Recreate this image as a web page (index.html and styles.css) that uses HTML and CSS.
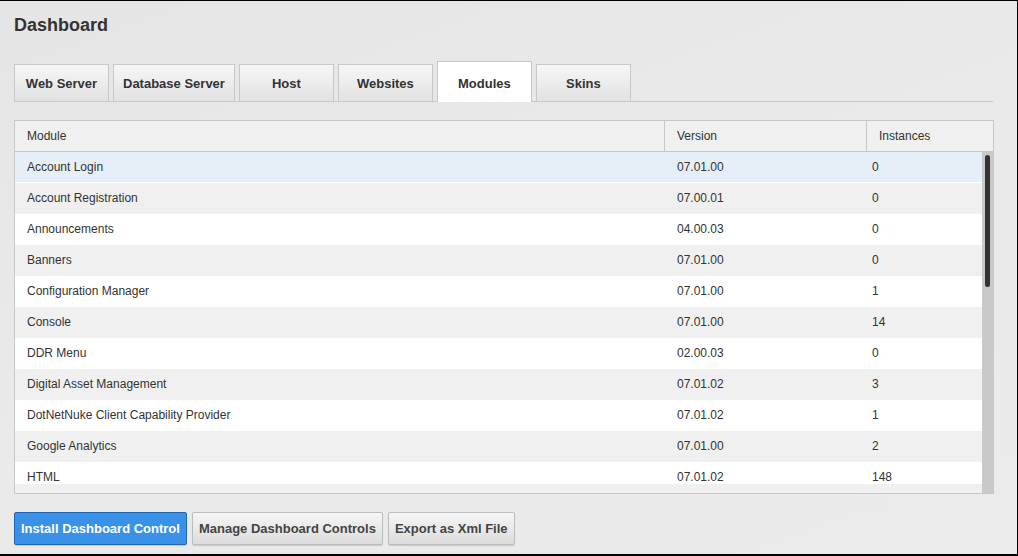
FILE: index.html
```html
<!DOCTYPE html>
<html lang="en">
<head>
<meta charset="utf-8">
<title>Dashboard</title>
<link rel="stylesheet" href="styles.css">
</head>
<body>
<div class="page">
  <h1 class="title">Dashboard</h1>
  <div class="tabs">
    <div class="tab">Web Server</div>
    <div class="tab">Database Server</div>
    <div class="tab">Host</div>
    <div class="tab">Websites</div>
    <div class="tab active">Modules</div>
    <div class="tab">Skins</div>
  </div>
  <div class="grid">
    <div class="grid-head">
      <div class="hcell c1">Module</div>
      <div class="hcell c2">Version</div>
      <div class="hcell c3">Instances</div>
    </div>
    <div class="grid-body">
      <div class="body-main">
        <div class="rows">
          <div class="row hl"><span>Account Login</span><span>07.01.00</span><span>0</span></div>
          <div class="row alt"><span>Account Registration</span><span>07.00.01</span><span>0</span></div>
          <div class="row"><span>Announcements</span><span>04.00.03</span><span>0</span></div>
          <div class="row alt"><span>Banners</span><span>07.01.00</span><span>0</span></div>
          <div class="row"><span>Configuration Manager</span><span>07.01.00</span><span>1</span></div>
          <div class="row alt"><span>Console</span><span>07.01.00</span><span>14</span></div>
          <div class="row"><span>DDR Menu</span><span>02.00.03</span><span>0</span></div>
          <div class="row alt"><span>Digital Asset Management</span><span>07.01.02</span><span>3</span></div>
          <div class="row"><span>DotNetNuke Client Capability Provider</span><span>07.01.02</span><span>1</span></div>
          <div class="row alt"><span>Google Analytics</span><span>07.01.00</span><span>2</span></div>
          <div class="row"><span>HTML</span><span>07.01.02</span><span>148</span></div>
        </div>
        <div class="hstrip"></div>
      </div>
      <div class="vtrack"><div class="vthumb"></div></div>
    </div>
  </div>
  <div class="actions">
    <button class="btn primary">Install Dashboard Control</button>
    <button class="btn">Manage Dashboard Controls</button>
    <button class="btn">Export as Xml File</button>
  </div>
</div>
</body>
</html>
```

FILE: styles.css
```css
* { box-sizing: border-box; }
html, body { margin: 0; padding: 0; }
body {
  width: 1018px;
  height: 556px;
  overflow: hidden;
  border-top: 1px solid #000;
  border-right: 1px solid #000;
  border-bottom: 2px solid #000;
  background: linear-gradient(160deg, #e5e5e5 0%, #eaeaea 50%, #ebebeb 100%);
  font-family: "Liberation Sans", Arial, sans-serif;
  color: #333;
}
.page {
  padding: 13px 24px 0 14px;
}
.title {
  margin: 0;
  font-size: 18px;
  line-height: 22px;
  font-weight: bold;
  color: #333;
}
.tabs {
  margin-top: 25px;
  display: flex;
  align-items: flex-end;
  gap: 4px;
  height: 41px;
  border-bottom: 1px solid #c8c8c8;
  width: 979px;
}
.tab {
  min-width: 95px;
  height: 37px;
  padding: 0 9px;
  border: 1px solid #c8c8c8;
  border-bottom: none;
  background: linear-gradient(#f6f6f6, #e2e2e2);
  font-size: 13px;
  font-weight: bold;
  color: #333;
  display: flex;
  align-items: center;
  justify-content: center;
  white-space: nowrap;
}
.tab.active {
  height: 41px;
  margin-bottom: -1px;
  background: #fff;
  padding-top: 2px;
}
.grid {
  margin-top: 18px;
  width: 980px;
  border: 1px solid #c8c8c8;
  background: #fff;
}
.grid-head {
  display: grid;
  grid-template-columns: 649px 202px 1fr;
  height: 31px;
  background: #eff0ef;
  border-bottom: 1px solid #c8c8c8;
}
.hcell {
  font-size: 12px;
  line-height: 30px;
  padding-left: 12px;
  color: #333;
}
.hcell.c2, .hcell.c3 { border-left: 1px solid #c8c8c8; }
.grid-body {
  display: flex;
  height: 341px;
}
.body-main {
  width: 967px;
  display: flex;
  flex-direction: column;
}
.rows {
  height: 332px;
  overflow: hidden;
}
.row {
  display: grid;
  grid-template-columns: 650px 195px 1fr;
  height: 31px;
  padding-bottom: 2px;
  align-items: center;
  font-size: 12px;
  color: #333;
  background: #fff;
}
.row span { padding-left: 12px; white-space: nowrap; }
.row.alt { background: #f0f0f0; }
.row.hl { background: #e6eef8; box-shadow: inset 0 -1px 0 #fff; }
.hstrip {
  height: 9px;
  background: #f0f0f0;
}
.vtrack {
  width: 11px;
  background: #c9c9c9;
  padding: 3px 0 0 3px;
}
.vthumb {
  width: 5px;
  height: 132px;
  background: #333;
  border-radius: 3px;
}
.actions {
  margin-top: 18px;
  display: flex;
  gap: 5px;
}
.btn {
  height: 33px;
  padding: 0 6px;
  font-family: "Liberation Sans", Arial, sans-serif;
  font-size: 13px;
  font-weight: bold;
  color: #444;
  border: 1px solid #bdbdbd;
  border-radius: 2px;
  background: linear-gradient(#f6f6f6, #dcdcdc);
  box-shadow: 0 1px 1px rgba(0,0,0,0.15);
}
.btn.primary {
  color: #fff;
  background: #3a91e8;
  border-color: #2366b0;
  padding: 0 6px;
}
```
